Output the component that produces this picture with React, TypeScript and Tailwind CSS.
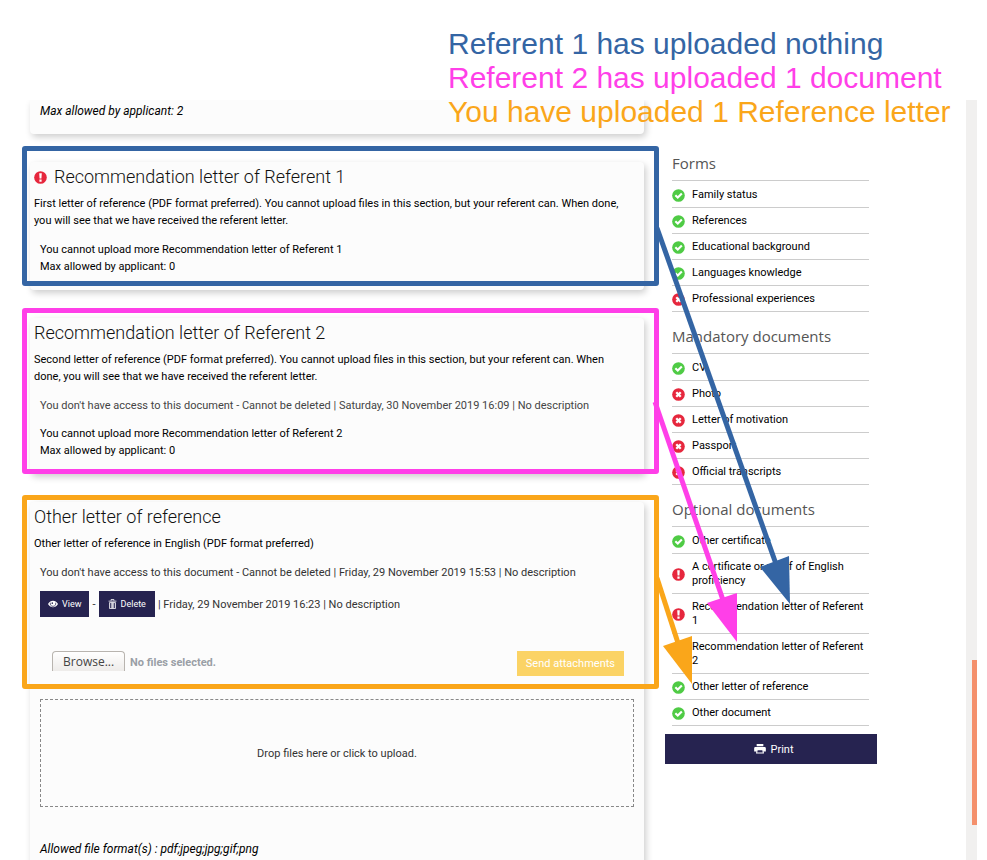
import type { ReactNode } from 'react'
import { clsx } from 'clsx'

type Status = 'ok' | 'missing' | 'warning' | 'none'

type Item = { label: string; status: Status }

const groups: { title: string; items: Item[] }[] = [
  {
    title: 'Forms',
    items: [
      { label: 'Family status', status: 'ok' },
      { label: 'References', status: 'ok' },
      { label: 'Educational background', status: 'ok' },
      { label: 'Languages knowledge', status: 'ok' },
      { label: 'Professional experiences', status: 'missing' },
    ],
  },
  {
    title: 'Mandatory documents',
    items: [
      { label: 'CV', status: 'ok' },
      { label: 'Photo', status: 'missing' },
      { label: 'Letter of motivation', status: 'missing' },
      { label: 'Passport', status: 'missing' },
      { label: 'Official transcripts', status: 'missing' },
    ],
  },
  {
    title: 'Optional documents',
    items: [
      { label: 'Other certificate', status: 'ok' },
      { label: 'A certificate or proof of English proficiency', status: 'warning' },
      { label: 'Recommendation letter of Referent 1', status: 'warning' },
      { label: 'Recommendation letter of Referent 2', status: 'none' },
      { label: 'Other letter of reference', status: 'ok' },
      { label: 'Other document', status: 'ok' },
    ],
  },
]

function StatusIcon({ status }: { status: Status }) {
  return (
    <svg viewBox="0 0 14 14" className="size-[13px] shrink-0" aria-hidden="true">
      {status !== 'none' && <circle cx="7" cy="7" r="6.8" fill={status === 'ok' ? '#4fcb45' : '#e6273d'} />}
      {status === 'ok' && <path d="M3.600 6.700 6.200 9.200 10.600 4.800" fill="none" stroke="#fff" strokeWidth="2.300" />}
      {status === 'missing' && <path d="M4.600 4.600 9.400 9.400M9.400 4.600 4.600 9.400" stroke="#fff" strokeWidth="2.500" />}
      {status === 'warning' && <path d="M5.600 2.300h2.800L8 8.200H6zM5.800 9.200h2.400v2.400H5.800z" fill="#fff" />}
    </svg>
  )
}

function EyeIcon() {
  return (
    <svg viewBox="0 0 14 10" className="h-[8px] w-[10px]" aria-hidden="true">
      <path d="M0 5C2 1.8 4.300 .5 7 .5S12 1.800 14 5C12 8.200 9.700 9.500 7 9.500S2 8.200 0 5z" fill="#fff" />
      <path d="M3.300 3.200C2.500 6 4.500 8.300 7 8.300s4.500-2.300 3.700-5.100" fill="none" stroke="#262350" strokeWidth="1" />
      <circle cx="6" cy="3.800" r="1.100" fill="#262350" />
    </svg>
  )
}

function TrashIcon() {
  return (
    <svg viewBox="0 0 12 14" className="h-[10px] w-[9px]" fill="none" stroke="#fff" aria-hidden="true">
      <path d="M.5 3h11M4 2.500V.7h4v1.800M1.800 5h8.400v8.300H1.800zM4.300 5v8M6 5v8M7.700 5v8" strokeWidth="1.100" />
    </svg>
  )
}

function PrintIcon() {
  return (
    <svg viewBox="0 0 14 12" className="h-[10px] w-[12px]" fill="#fff" aria-hidden="true">
      <path d="M3 0h8v2.800H3zM1 3.500h12l1 1V9h-2.500V8h-9v1H0V4.500zM2.800 7.500h8.400l.6 4H2.200z" />
      <path d="M4.200 7.500h5.600l.5 2.800H3.700z" fill="#262350" />
    </svg>
  )
}

function Card({ className, children }: { className?: string; children: ReactNode }) {
  return (
    <section
      className={clsx('relative rounded-[4px] bg-[#fcfcfc] px-[4px] shadow-[2px_3px_7px_0_rgba(0,0,0,0.2)]', className)}
    >
      {children}
    </section>
  )
}

function Title({ warning, children }: { warning?: boolean; children: ReactNode }) {
  return (
    <h2 className="flex items-center gap-[7px] text-[18px] leading-[22px] font-light text-[#111]">
      {warning && <StatusIcon status="warning" />}
      {children}
    </h2>
  )
}

// Coloured frame drawn around a card
function Frame({ className }: { className: string }) {
  return <div className={clsx('pointer-events-none absolute -right-[15px] -left-[8px] rounded-[3px] border-[5px]', className)} />
}

function Arrows() {
  return (
    <svg
      viewBox="650 100 227 600"
      className="pointer-events-none absolute top-0 -left-[15px] h-[600px] w-[227px]"
      strokeWidth="5"
      aria-hidden="true"
    >
      <path d="M657 228 776 564" stroke="#3465a4" />
      <path d="M760 567 789 556 790 604z" fill="#3465a4" />
      <path d="M655 402 723 600" stroke="#ff3fe8" />
      <path d="M707 603 737 593 737 642z" fill="#ff3fe8" />
      <path d="M657 578 678 643" stroke="#faa61a" />
      <path d="M663 646 692 636 692 684z" fill="#faa61a" />
    </svg>
  )
}

export default function App() {
  return (
    <div className="flex h-screen flex-col overflow-hidden bg-white font-[Roboto,'Liberation_Sans',sans-serif] text-[11px] leading-[17px] text-black">
      <header className="relative z-20 h-[100px] shrink-0 pt-[27px] pl-[448px] font-['Liberation_Sans',sans-serif] text-[30px] leading-[34px] whitespace-nowrap">
        <p className="text-[#3465a4]">Referent 1 has uploaded nothing</p>
        <p className="text-[#ff3fe8]">Referent 2 has uploaded 1 document</p>
        <p className="text-[#faa61a]">You have uploaded 1 Reference letter</p>
      </header>

      <div className="flex min-h-0 flex-1 overflow-hidden pr-[10px] pl-[30px]">
        <main className="flex min-w-0 flex-1 flex-col gap-[28px]">
          <Card className="rounded-t-none pt-[3px] pb-[14px]">
            <p className="px-[6px] text-[12px] leading-[17px] italic">Max allowed by applicant: 2</p>
          </Card>

          <Card className="pt-[4px] pb-[15px]">
            <Title warning>Recommendation letter of Referent 1</Title>
            <p className="mt-[7px] pr-[20px]">
              First letter of reference (PDF format preferred). You cannot upload files in this section, but your
              referent can. When done, you will see that we have received the referent letter.
            </p>
            <div className="mt-[12px] px-[6px]">
              <p>You cannot upload more Recommendation letter of Referent 1</p>
              <p>Max allowed by applicant: 0</p>
            </div>
            <Frame className="-top-[16px] bottom-[4px] border-[#3465a4]" />
          </Card>

          <Card className="pt-[4px] pb-[15px]">
            <Title>Recommendation letter of Referent 2</Title>
            <p className="mt-[7px] pr-[20px]">
              Second letter of reference (PDF format preferred). You cannot upload files in this section, but your
              referent can. When done, you will see that we have received the referent letter.
            </p>
            <p className="mt-[12px] px-[6px] text-[#444]">
              You don't have access to this document - Cannot be deleted | Saturday, 30 November 2019 16:09 | No
              description
            </p>
            <div className="mt-[11px] px-[6px]">
              <p>You cannot upload more Recommendation letter of Referent 2</p>
              <p>Max allowed by applicant: 0</p>
            </div>
            <Frame className="-top-[10px] bottom-0 border-[#ff3fe8]" />
          </Card>

          <Card className="pt-[4px] pb-[30px]">
            <Title>Other letter of reference</Title>
            <p className="mt-[7px]">Other letter of reference in English (PDF format preferred)</p>
            <div className="px-[6px] text-[#333]">
              <p className="mt-[12px]">
                You don't have access to this document - Cannot be deleted | Friday, 29 November 2019 15:53 | No
                description
              </p>
              <div className="mt-[10px] flex items-center gap-[3px]">
                <button className="flex h-[26px] items-center gap-[4px] bg-[#262350] px-[8px] text-[9px] text-white">
                  <EyeIcon />
                  View
                </button>
                <span>-</span>
                <button className="flex h-[26px] items-center gap-[4px] bg-[#262350] px-[9px] text-[9px] text-white">
                  <TrashIcon />
                  Delete
                </button>
                <span>| Friday, 29 November 2019 16:23 | No description</span>
              </div>
              <div className="mt-[34px] flex items-start pr-[10px] pl-[12px]">
                <button className="h-[20px] rounded-t-[4px] border border-b-0 border-[#b8b4af] bg-linear-to-b from-white to-[#eeecea] px-[10px] font-['Open_Sans',sans-serif] text-[12px] text-[#444]">
                  Browse...
                </button>
                <span className="ml-[5px] leading-[24px] font-bold text-[#9a9fa6]">No files selected.</span>
                <button className="ml-auto h-[25px] bg-[#fbd365] px-[9px] text-white">Send attachments</button>
              </div>
              <div className="mt-[23px] flex h-[108px] items-center justify-center border border-dashed border-[#888]">
                Drop files here or click to upload.
              </div>
              <p className="mt-[34px] text-[12px] leading-[17px] text-black italic">
                Allowed file format(s) : pdf;jpeg;jpg;gif;png
              </p>
            </div>
            <Frame className="-top-[7px] h-[194px] border-[#faa61a]" />
          </Card>
        </main>

        <aside className="relative ml-[21px] w-[212px] shrink-0 pt-[39px]">
          {groups.map((group) => (
            <div key={group.title} className="pr-[8px] pl-[7px]">
              <h3 className="flex h-[42px] items-center border-b border-[#ccc] pt-[8px] font-['Open_Sans',sans-serif] text-[15px] text-[#555]">
                {group.title}
              </h3>
              <ul className="leading-[14px]">
                {group.items.map((item) => (
                  <li
                    key={item.label}
                    className="flex items-center gap-[7px] border-b border-[#ccc] pt-[6px] pb-[5px] first:pt-[7px]"
                  >
                    <StatusIcon status={item.status} />
                    <a href="#">{item.label}</a>
                  </li>
                ))}
              </ul>
            </div>
          ))}
          <button className="mt-[8px] flex h-[30px] w-full items-center justify-center gap-[4px] bg-[#262350] pl-[6px] text-white">
            <PrintIcon />
            Print
          </button>
          <Arrows />
        </aside>

        <div className="ml-[89px] flex w-[11px] shrink-0 justify-end bg-[#f1f0ef]">
          <div className="mt-[560px] h-[165px] w-[5px] bg-[#f4906c]" />
        </div>
      </div>
    </div>
  )
}
